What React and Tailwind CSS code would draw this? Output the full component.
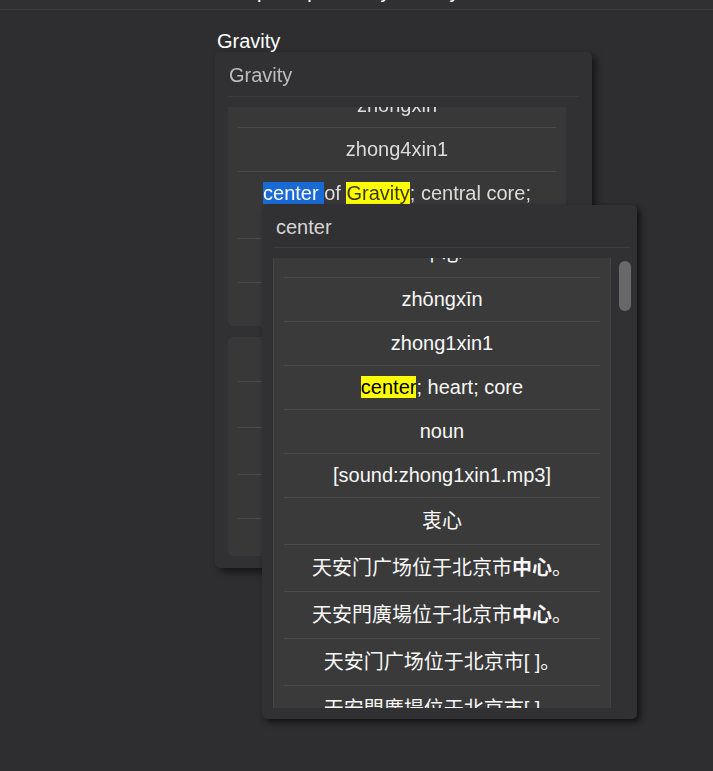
import React from 'react'

const FONT = "font-['Liberation_Sans','Noto_Sans_CJK_SC',sans-serif]"

// rows in the front popup, first one scrolled half out of view
const FRONT_ROWS = [
  { h: 'h-[47px]', text: '中心' },
  { h: 'h-[44px]', text: 'zhōngxīn' },
  { h: 'h-[44px]', text: 'zhong1xin1' },
  {
    h: 'h-[44px]',
    text: (
      <>
        <span className="bg-[#ffff00] text-black">center</span>; heart; core
      </>
    ),
  },
  { h: 'h-[44px]', text: 'noun' },
  { h: 'h-[44px]', text: '[sound:zhong1xin1.mp3]' },
  { h: 'h-[47px]', text: '衷心' },
  {
    h: 'h-[47px]',
    text: (
      <>
        天安门广场位于北京市<b className="font-bold">中心</b>。
      </>
    ),
  },
  {
    h: 'h-[47px]',
    text: (
      <>
        天安門廣場位于北京市<b className="font-bold">中心</b>。
      </>
    ),
  },
  { h: 'h-[47px]', text: '天安门广场位于北京市[ ]。' },
  { h: 'h-[47px]', text: '天安門廣場位于北京市[ ]。' },
]

const BACK_ROWS_1 = [
  { h: 'h-[44px]', text: 'zhongxin' },
  { h: 'h-[44px]', text: 'zhong4xin1' },
  {
    h: 'h-[67px]',
    text: (
      <>
        <span className="bg-[#1a6ad6] text-white">center </span>of{' '}
        <span className="bg-[#ffff00] text-[#3a3a00]">Gravity</span>; central core; focus; key point
      </>
    ),
  },
  { h: 'h-[44px]', text: 'noun' },
  { h: 'h-[44px]', text: '[sound:zhong4xin1.mp3]' },
]

const BACK_ROWS_2 = [
  { h: 'h-[45px]', text: '重心' },
  { h: 'h-[46px]', text: 'zhòngxīn' },
  { h: 'h-[47px]', text: 'zhong4xin1' },
  { h: 'h-[44px]', text: 'noun' },
  { h: 'h-[44px]', text: '' },
]

function Row({ h, children, last }) {
  return (
    <div
      className={`${h} flex items-center justify-center text-center px-[6px] leading-[23px] ${
        last ? '' : 'border-b border-[#4a4a4a]'
      }`}
    >
      <div>{children}</div>
    </div>
  )
}

function BackCard() {
  return (
    <div className="w-[377px] h-[516px] rounded-[5px] bg-[#313133] shadow-[4px_4px_7px_rgba(0,0,0,0.55)] blur-[0.7px] flex flex-col">
      <div className="h-[45px] pt-[1px] mx-[13px] border-b border-[#3b3b3d] flex items-center pl-[1px] text-[20px] text-[#bdbdbd]">
        Gravity
      </div>
      <div className="mt-[10px] ml-[13px] w-[338px] h-[219px] rounded-b-[5px] bg-[#383838] overflow-hidden text-[20px] text-[#dcdcdc]">
        <div className="-mt-[23px] mx-[10px]">
          {BACK_ROWS_1.map((r, i) => (
            <Row key={i} h={r.h} last={i === BACK_ROWS_1.length - 1}>
              {r.text}
            </Row>
          ))}
        </div>
      </div>
      <div className="mt-[11px] ml-[13px] w-[338px] h-[219px] rounded-[5px] bg-[#383838] overflow-hidden text-[20px] text-[#dcdcdc]">
        <div className="mx-[10px]">
          {BACK_ROWS_2.map((r, i) => (
            <Row key={i} h={r.h} last={i === BACK_ROWS_2.length - 1}>
              {r.text}
            </Row>
          ))}
        </div>
      </div>
    </div>
  )
}

function Popup() {
  return (
    <div className="absolute left-[262px] top-[205px] w-[375px] h-[514px] rounded-[5px] bg-[#313133] shadow-[3px_3px_6px_rgba(0,0,0,0.65)] flex flex-col">
      <div className="h-[43px] pt-[2px] ml-[11px] mr-[6px] border-b border-[#3e3e40] flex items-center pl-[3px] text-[20px] text-[#d6d6d6]">
        center
      </div>
      <div className="mt-[10px] ml-[11px] flex items-start">
        <div className="w-[338px] h-[450px] bg-[#3a3a3a] border-x border-[#454545] overflow-hidden text-[20px] text-[#f7f7f7]">
          <div className="-mt-[27px] mx-[10px]">
            {FRONT_ROWS.map((r, i) => (
              <Row key={i} h={r.h}>
                {r.text}
              </Row>
            ))}
          </div>
        </div>
        {/* scrollbar thumb */}
        <div className="ml-[8px] mt-[3px] w-[12px] h-[50px] rounded-full bg-[#686868]" />
      </div>
    </div>
  )
}

export default function App() {
  return (
    <div className={`relative min-h-screen overflow-hidden bg-[#2e2e30] ${FONT}`}>
      {/* top bar, sentence scrolled mostly out of view */}
      <div className="h-[10px] overflow-hidden border-b border-[#3a3a3c] bg-[#303032]">
        <p className="-mt-[20px] pl-[236px] text-[20px] leading-[23px] text-white whitespace-nowrap">
          Tap the picks any Gravity
        </p>
      </div>

      <div className="pl-[215px] pt-[20px]">
        <div className="ml-[2px] text-[20px] leading-[22px] text-white">Gravity</div>
        <BackCard />
      </div>

      <Popup />
    </div>
  )
}
